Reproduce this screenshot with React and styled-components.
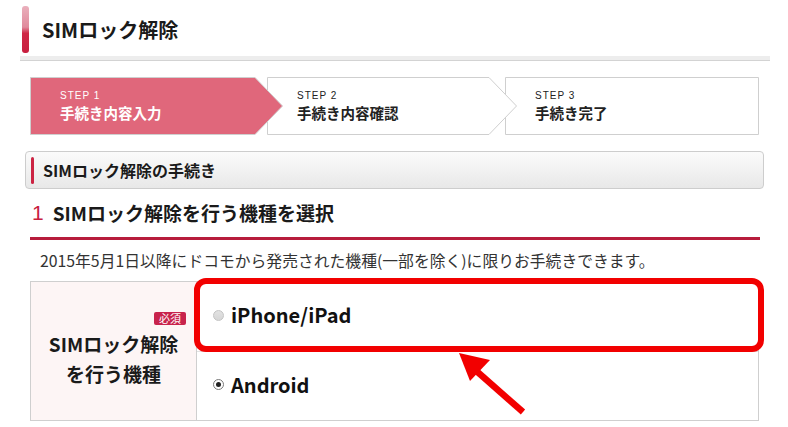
import React from "react";
import styled, { createGlobalStyle } from "styled-components";

const GlobalStyle = createGlobalStyle`
  body {
    margin: 0;
    background: #fff;
    font-family: "Noto Sans CJK JP", "Noto Sans", sans-serif;
    color: #222;
  }
`;

const steps = [
  { no: 1, label: "手続き内容入力", width: 253, overlap: 0, active: true, arrow: true },
  { no: 2, label: "手続き内容確認", width: 250, overlap: 16, active: false, arrow: true },
  { no: 3, label: "手続き完了", width: 254, overlap: 12, active: false, arrow: false },
];

const StepShape = ({ width, active, arrow }) => {
  const h = 58;
  const w = width;
  const points = arrow
    ? `0.5,0.5 ${w - 28},0.5 ${w - 0.5},${h / 2} ${w - 28},${h - 0.5} 0.5,${h - 0.5}`
    : `0.5,0.5 ${w - 0.5},0.5 ${w - 0.5},${h - 0.5} 0.5,${h - 0.5}`;
  return (
    <ShapeSvg width={w} height={h} viewBox={`0 0 ${w} ${h}`}>
      <polygon
        points={points}
        fill={active ? "#e0677b" : "#fff"}
        stroke="#cfcfcf"
        strokeWidth="1"
        strokeLinejoin="round"
      />
    </ShapeSvg>
  );
};

const App = () => {
  return (
    <>
      <GlobalStyle />
      <Page>
        <TitleBar>
          <AccentBar />
          <Title>SIMロック解除</Title>
        </TitleBar>

        <StepRow>
          {steps.map((s, i) => (
            <Step key={s.no} $width={s.width} $z={10 - i} $overlap={s.overlap}>
              <StepShape width={s.width} active={s.active} arrow={s.arrow} />
              <StepText $active={s.active}>
                <StepNo>STEP {s.no}</StepNo>
                <StepLabel>{s.label}</StepLabel>
              </StepText>
            </Step>
          ))}
        </StepRow>

        <SectionBox>
          <SectionMark />
          <SectionTitle>SIMロック解除の手続き</SectionTitle>
        </SectionBox>

        <Heading>
          <HeadingNo>1</HeadingNo>
          <HeadingText>SIMロック解除を行う機種を選択</HeadingText>
        </Heading>

        <Description>
          2015年5月1日以降にドコモから発売された機種(一部を除く)に限りお手続きできます。
        </Description>

        <FormTable>
          <LabelCell>
            <Required>必須</Required>
            <LabelText>
              SIMロック解除
              <br />
              を行う機種
            </LabelText>
          </LabelCell>
          <OptionCell>
            <Radio $disabled />
            <OptionText>iPhone/iPad</OptionText>
          </OptionCell>
          <OptionCell $second>
            <Radio $checked />
            <OptionText>Android</OptionText>
          </OptionCell>

          <Highlight />
          <Arrow width="80" height="70" viewBox="0 0 80 70">
            <line x1="72" y1="64" x2="22" y2="20" stroke="#f20000" strokeWidth="6.5" />
            <polygon points="8,5 19,33 39,12" fill="#f20000" />
          </Arrow>
        </FormTable>
      </Page>
    </>
  );
};

const Page = styled.div`
  width: 750px;
  padding: 6px 0 0 20px;
`;

const TitleBar = styled.div`
  display: flex;
  align-items: center;
  padding: 0 0 7px 2px;
  border-bottom: 1px solid #d3d3d3;
  background: linear-gradient(
    to bottom,
    #fff calc(100% - 4px),
    #ededed calc(100% - 4px)
  );
`;

const AccentBar = styled.div`
  width: 7px;
  height: 47px;
  border-radius: 3px;
  background: linear-gradient(
    to bottom,
    #eab0bc 0%,
    #e08a9c 45%,
    #cf2746 58%,
    #c81f3f 100%
  );
`;

const Title = styled.h1`
  margin: 0 0 0 13px;
  font-size: 20px;
  font-weight: 700;
  line-height: 26px;
  color: #1a1a1a;
`;

const StepRow = styled.div`
  display: flex;
  margin: 16px 0 0 10px;
`;

const Step = styled.div`
  position: relative;
  flex: none;
  width: ${(p) => p.$width}px;
  height: 58px;
  margin-left: ${(p) => -p.$overlap}px;
  z-index: ${(p) => p.$z};
`;

const ShapeSvg = styled.svg`
  position: absolute;
  top: 0;
  left: 0;
`;

const StepText = styled.div`
  position: relative;
  display: flex;
  flex-direction: column;
  justify-content: center;
  height: 100%;
  padding: 0 0 1px 30px;
  box-sizing: border-box;
  color: ${(p) => (p.$active ? "#fff" : "#222")};
`;

const StepNo = styled.span`
  font-family: "Liberation Sans", Arial, sans-serif;
  font-size: 10px;
  letter-spacing: 1px;
  line-height: 14px;
`;

const StepLabel = styled.span`
  font-size: 14.5px;
  font-weight: 700;
  line-height: 20px;
`;

const SectionBox = styled.div`
  display: flex;
  align-items: center;
  gap: 9px;
  width: 739px;
  height: 38px;
  margin: 16px 0 0 5px;
  padding-left: 5px;
  box-sizing: border-box;
  border: 1px solid #cdcdcd;
  border-radius: 4px;
  background: linear-gradient(to bottom, #fbfbfb, #e8e8e8);
`;

const SectionMark = styled.div`
  width: 3px;
  height: 27px;
  border-radius: 2px;
  background: #cc2443;
`;

const SectionTitle = styled.div`
  font-size: 16px;
  font-weight: 700;
  color: #1a1a1a;
`;

const Heading = styled.div`
  display: flex;
  align-items: center;
  gap: 9px;
  margin: 11px 10px 0;
  padding: 0 0 11px 2px;
  height: 26px;
  border-bottom: 3px solid #b71c3c;
`;

const HeadingNo = styled.span`
  font-family: "Liberation Sans", Arial, sans-serif;
  font-size: 21px;
  color: #c8203e;
  line-height: 26px;
`;

const HeadingText = styled.span`
  font-size: 19px;
  font-weight: 700;
  line-height: 26px;
  color: #1a1a1a;
`;

const Description = styled.p`
  margin: 11px 0 0 20px;
  font-size: 15.8px;
  line-height: 20px;
  color: #333;
  white-space: nowrap;
`;

const FormTable = styled.div`
  position: relative;
  display: grid;
  grid-template-columns: 166px 1fr;
  grid-template-rows: 69px 69px;
  width: 729px;
  margin: 10px 0 0 10px;
  border: 1px solid #cfcfcf;
  box-sizing: border-box;
`;

const LabelCell = styled.div`
  grid-row: 1 / span 2;
  display: flex;
  flex-direction: column;
  align-items: center;
  justify-content: center;
  background: #fdf5f5;
  border-right: 1px solid #cfcfcf;
  padding-bottom: 2px;
`;

const Required = styled.span`
  align-self: flex-end;
  margin: 0 10px 4px 0;
  padding: 0 5px;
  font-size: 11px;
  line-height: 13px;
  color: #fff;
  background: #c8234c;
  border-radius: 2px;
`;

const LabelText = styled.div`
  font-size: 19px;
  font-weight: 700;
  line-height: 30px;
  text-align: center;
  color: #1a1a1a;
`;

const OptionCell = styled.label`
  display: flex;
  align-items: center;
  gap: 7px;
  padding: 0 0 3px 16px;
  border-top: ${(p) => (p.$second ? "1px solid #e2e2e2" : "none")};
`;

const Radio = styled.span`
  position: relative;
  width: 11px;
  height: 11px;
  border-radius: 50%;
  box-sizing: border-box;
  border: 1px solid ${(p) => (p.$disabled ? "#c4c4c4" : "#7a7a7a")};
  background: ${(p) =>
    p.$disabled ? "linear-gradient(#e2e2e2, #d6d6d6)" : "#fff"};
  &::after {
    content: "";
    display: ${(p) => (p.$checked ? "block" : "none")};
    position: absolute;
    top: 2px;
    left: 2px;
    width: 5px;
    height: 5px;
    border-radius: 50%;
    background: #222;
  }
`;

const OptionText = styled.span`
  font-size: 20px;
  font-weight: 700;
  line-height: 26px;
  color: #111;
`;

const Highlight = styled.div`
  position: absolute;
  left: 163px;
  top: -4px;
  width: 570px;
  height: 74px;
  box-sizing: border-box;
  border: 6px solid #f20000;
  border-radius: 12px;
  pointer-events: none;
`;

const Arrow = styled.svg`
  position: absolute;
  left: 420px;
  top: 66px;
  pointer-events: none;
`;

export default App;
